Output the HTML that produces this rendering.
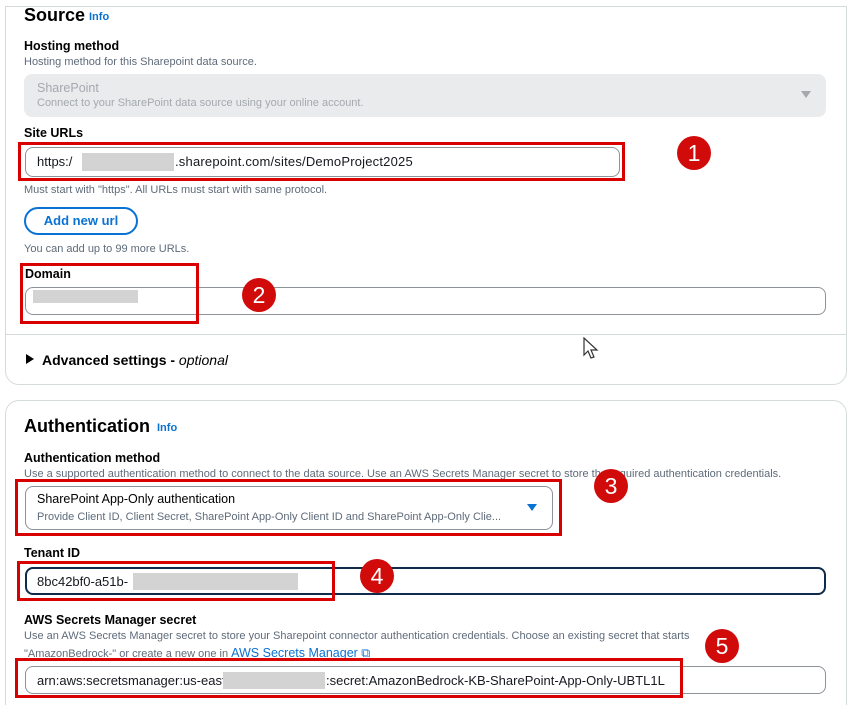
<!DOCTYPE html>
<html style="overflow:hidden;width:850px;height:705px"><head><meta charset="utf-8"><style>
*{box-sizing:border-box;margin:0;padding:0}
body{width:850px;height:705px;background:#fff;position:relative;overflow:hidden;font-family:"Liberation Sans",Arial,sans-serif;color:#16191f}
.a{position:absolute;white-space:nowrap}
.card{position:absolute;border:1px solid #d5dbdb;border-radius:14px;background:#fff}
.h{font-size:18px;font-weight:bold;color:#000}
.info{font-size:11px;font-weight:bold;color:#0972d3}
.lbl{font-size:12.5px;font-weight:bold;color:#000}
.d{font-size:11px;color:#5f6b7a}
.inp{position:absolute;border:1.5px solid #8d9399;border-radius:8px;background:#fff}
.red{position:absolute;border:3px solid #d90000}
.bd{position:absolute;width:34px;height:34px;border-radius:50%;background:#d10a0a;color:#fff;font-size:23px;text-align:center;line-height:34px}
.blur{position:absolute;background:#d3d3d3}
.t{font-size:13px;color:#16191f}
</style></head><body>
<div class="card" style="left:5px;top:6px;width:842px;height:379px;border-top-left-radius:0;border-top-right-radius:0"></div>
<div class="a h" style="left:24px;top:5px">Source</div>
<div class="a info" style="left:89px;top:11px">Info</div>
<div class="a lbl" style="left:24px;top:39px">Hosting method</div>
<div class="a d" style="left:24px;top:56px">Hosting method for this Sharepoint data source.</div>
<div class="a" style="left:24px;top:74px;width:802px;height:43px;background:#e9ebed;border-radius:8px"></div>
<div class="a" style="left:37px;top:81px;font-size:12.5px;color:#a4a9ae">SharePoint</div>
<div class="a" style="left:37px;top:97px;font-size:11px;color:#a4a9ae">Connect to your SharePoint data source using your online account.</div>
<div class="a" style="left:801px;top:91px;width:0;height:0;border-left:5px solid transparent;border-right:5px solid transparent;border-top:7px solid #a4a9ae"></div>
<div class="a lbl" style="left:24px;top:126px">Site URLs</div>
<div class="inp" style="left:25px;top:147px;width:595px;height:30px"></div>
<div class="red" style="left:18px;top:142px;width:607px;height:39px"></div>
<div class="a t" style="left:37px;top:154px">https:/</div>
<div class="blur" style="left:82px;top:153px;width:92px;height:18px"></div>
<div class="a t" style="left:175px;top:154px;letter-spacing:0.2px">.sharepoint.com/sites/DemoProject2025</div>
<div class="bd" style="left:677px;top:136px">1</div>
<div class="a d" style="left:24px;top:184px">Must start with "https". All URLs must start with same protocol.</div>
<div class="a" style="left:24px;top:207px;width:114px;height:28px;border:2px solid #0972d3;border-radius:14px;color:#0972d3;font-weight:bold;font-size:13px;text-align:center;line-height:24px">Add new url</div>
<div class="a d" style="left:24px;top:243px">You can add up to 99 more URLs.</div>
<div class="a lbl" style="left:25px;top:267px">Domain</div>
<div class="inp" style="left:25px;top:287px;width:801px;height:28px"></div>
<div class="blur" style="left:33px;top:290px;width:105px;height:13px"></div>
<div class="red" style="left:20px;top:263px;width:179px;height:61px"></div>
<div class="bd" style="left:242px;top:278px">2</div>
<div class="a" style="left:5px;top:334px;width:842px;height:1px;background:#d5dbdb"></div>
<div class="a" style="left:26px;top:354px;width:0;height:0;border-top:5px solid transparent;border-bottom:5px solid transparent;border-left:8px solid #000"></div>
<div class="a" style="left:42px;top:352px;font-size:14px;font-weight:bold;color:#000">Advanced settings - <i style="font-weight:normal">optional</i></div>
<svg class="a" style="left:583px;top:337px" width="18" height="24" viewBox="0 0 18 24"><path d="M1 1 L1 18 L5 14 L8 21 L11 20 L8 13 L14 13 Z" fill="#fff" stroke="#333" stroke-width="1.2"/></svg>

<div class="card" style="left:5px;top:400px;width:842px;height:320px"></div>
<div class="a h" style="left:24px;top:416px">Authentication</div>
<div class="a info" style="left:157px;top:422px">Info</div>
<div class="a lbl" style="left:24px;top:451px">Authentication method</div>
<div class="a d" style="left:24px;top:468px">Use a supported authentication method to connect to the data source. Use an AWS Secrets Manager secret to store the required authentication credentials.</div>
<div class="inp" style="left:25px;top:486px;width:528px;height:44px"></div>
<div class="a" style="left:37px;top:492px;font-size:12.5px;color:#000">SharePoint App-Only authentication</div>
<div class="a d" style="left:37px;top:511px">Provide Client ID, Client Secret, SharePoint App-Only Client ID and SharePoint App-Only Clie...</div>
<div class="a" style="left:527px;top:504px;width:0;height:0;border-left:5px solid transparent;border-right:5px solid transparent;border-top:7px solid #0972d3"></div>
<div class="red" style="left:15px;top:479px;width:547px;height:57px"></div>
<div class="bd" style="left:594px;top:469px">3</div>
<div class="a lbl" style="left:24px;top:546px">Tenant ID</div>
<div class="inp" style="left:25px;top:567px;width:801px;height:28px;border:2px solid #0f2a4a"></div>
<div class="a t" style="left:37px;top:574px">8bc42bf0-a51b-</div>
<div class="blur" style="left:133px;top:573px;width:165px;height:17px"></div>
<div class="red" style="left:17px;top:561px;width:318px;height:40px"></div>
<div class="bd" style="left:360px;top:559px">4</div>
<div class="a lbl" style="left:24px;top:613px">AWS Secrets Manager secret</div>
<div class="a d" style="left:24px;top:630px">Use an AWS Secrets Manager secret to store your Sharepoint connector authentication credentials. Choose an existing secret that starts</div>
<div class="a d" style="left:24px;top:646px">"AmazonBedrock-" or create a new one in <span style="color:#0972d3;font-size:12.5px">AWS Secrets Manager ⧉</span></div>
<div class="bd" style="left:705px;top:629px">5</div>
<div class="inp" style="left:25px;top:666px;width:801px;height:28px"></div>
<div class="a t" style="left:37px;top:673px">arn:aws:secretsmanager:us-east-</div>
<div class="blur" style="left:223px;top:672px;width:102px;height:17px"></div>
<div class="a t" style="left:326px;top:673px">:secret:AmazonBedrock-KB-SharePoint-App-Only-UBTL1L</div>
<div class="red" style="left:15px;top:658px;width:668px;height:40px"></div>
</body></html>
